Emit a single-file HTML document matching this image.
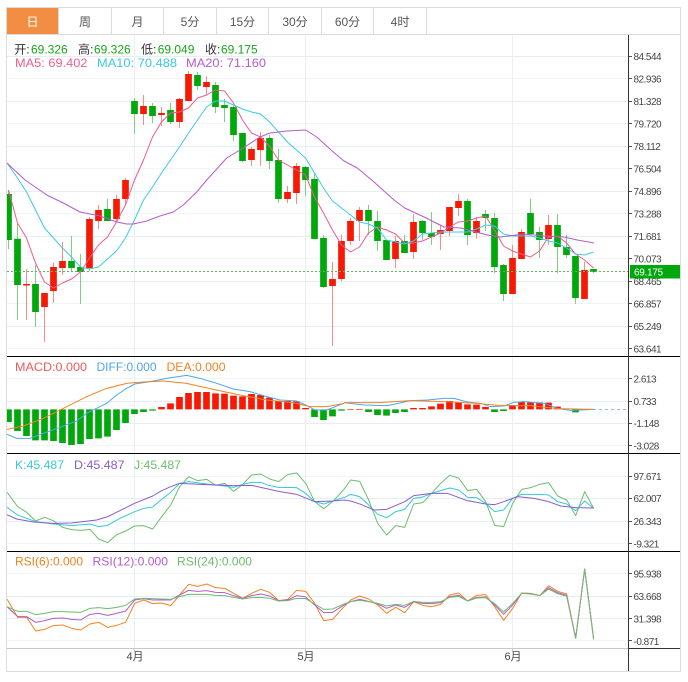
<!DOCTYPE html>
<html lang="zh">
<head>
<meta charset="utf-8">
<title>K线图</title>
<style>
html,body{margin:0;padding:0;background:#fff;width:688px;height:682px;overflow:hidden}
svg{display:block;font-family:"Liberation Sans","Noto Sans CJK SC",sans-serif}
.l{fill:none;stroke-width:1;stroke-linejoin:round;vector-effect:non-scaling-stroke}
.l polyline,polyline.l{vector-effect:non-scaling-stroke}
.ax text{font-size:10px;letter-spacing:-.5px;fill:#444}
.tab text{font-size:12px;fill:#555;text-anchor:middle}
.t{font-size:12px}
.tm{font-size:11px;fill:#444;text-anchor:middle}
</style>
</head>
<body>
<svg width="688" height="682" viewBox="0 0 688 682" xmlns="http://www.w3.org/2000/svg">
<defs>
<clipPath id="c"><rect x="7" y="35" width="621" height="613"/></clipPath>
</defs>
<!-- grid -->
<g shape-rendering="crispEdges" stroke-width="1">
<path stroke="#e6eef4" d="M7 56.5H628M7 101.5H628M7 146.5H628M7 191.5H628M7 236.5H628M7 281.5H628M7 326.5H628M7 401.5H628M7 423.5H628M7 498.5H628M7 521.5H628M7 596.5H628M7 618.5H628"/>
<path stroke="#f1f5f8" d="M7 78.5H628M7 123.5H628M7 168.5H628M7 213.5H628M7 258.5H628M7 303.5H628M7 348.5H628M7 378.5H628M7 445.5H628M7 476.5H628M7 543.5H628M7 573.5H628M7 640.5H628"/>
<path stroke="#e9f0f4" d="M134.5 35V648M305.5 35V648M512.5 35V648"/>
</g>
<!-- tabs -->
<g class="tab">
<rect x="7" y="8" width="51" height="26" fill="#f28e44"/>
<path shape-rendering="crispEdges" fill="none" stroke="#dcdcdc" d="M6.5 7.5H680.5V671.5H6.5ZM6.5 34.5H680.5M58.5 7V34M111.5 7V34M163.5 7V34M216.5 7V34M268.5 7V34M321.5 7V34M373.5 7V34M426.5 7V34"/>
<text x="32.5" y="26" style="fill:#fff">日</text>
<text x="85" y="26">周</text>
<text x="137.5" y="26">月</text>
<text x="190" y="26">5分</text>
<text x="242.5" y="26">15分</text>
<text x="295" y="26">30分</text>
<text x="347.5" y="26">60分</text>
<text x="400" y="26">4时</text>
</g>
<g clip-path="url(#c)">
<!-- wicks -->
<g shape-rendering="crispEdges" fill="none" stroke-width="1">
<path stroke="#7dd07d" d="M8.5 190V249M17.5 224V320M35.5 265V327M71.5 236V272M80.5 254V304M107.5 199V221M134.5 98V134M152.5 103V123M170.5 103V124M197.5 72V90M215.5 82V113M224.5 99V122M233.5 106V141M242.5 133V162M269.5 135V169M278.5 149V203M305.5 166V196M314.5 174V239M323.5 235V288M368.5 205V235M377.5 211V251M386.5 240V260M404.5 235V253M422.5 220V240M431.5 212V245M467.5 199V245M485.5 210V231M494.5 213V273M503.5 264V301M530.5 199V234M539.5 227V258M557.5 214V273M566.5 235V258M575.5 256V304M593.5 269V273"/>
<path stroke="#ff8a84" d="M26.5 269V320M44.5 293V342M53.5 263V303M62.5 242V275M89.5 217V271M98.5 205V229M116.5 195V222M125.5 178V205M143.5 95V125M161.5 107V126M179.5 98V128M188.5 71V101M206.5 76V95M251.5 147V166M260.5 132V166M287.5 186V203M296.5 163V204M332.5 262V346M341.5 235V281M350.5 218V245M359.5 207V241M395.5 236V268M413.5 214V259M440.5 225V250M449.5 207V236M458.5 194V216M476.5 217V239M512.5 245V294M521.5 229V259M548.5 215V245M584.5 262V299"/>
</g>
<!-- bodies -->
<path fill="none" stroke="#00a80b" stroke-width="6.7" d="M8.5 194V240M17.5 238.7V285M35.5 284V312M71.5 261V268M80.5 267V272M107.5 209V221M134.5 101V114M152.5 106V116M170.5 110V122M197.5 75V86M215.5 85V107M224.5 105V108M233.5 107V135M242.5 133V161M269.5 138V161M278.5 160V199M305.5 167V180M314.5 179V239M323.5 238V287M368.5 210V221M377.5 221V241M386.5 240V260M404.5 241V253M422.5 221V233M431.5 233V237M467.5 201V235M485.5 214V218M494.5 218V267M503.5 265V294M530.5 213V234M539.5 232V240M557.5 225V247M566.5 247V255M575.5 256V298M593.5 269V272"/>
<path fill="none" stroke="#f61a05" stroke-width="6.7" d="M26.5 284V285.5M44.5 293V307M53.5 267V291M62.5 261V268M89.5 219V268M98.5 210V221M116.5 199V219M125.5 180V199M143.5 106V114M161.5 113V115M179.5 99V122M188.5 74V101M206.5 82V87M251.5 149V160M260.5 138V150M287.5 192V199M296.5 166V193M332.5 279V286M341.5 241V279M350.5 221V241M359.5 210V221M395.5 241V259M413.5 222V252M440.5 230V234M449.5 207V231M458.5 201V208M476.5 221V233M512.5 258V294M521.5 232V259M548.5 225V239M584.5 270V299"/>
<!-- MA -->
<polyline class="l" stroke="#ec5b8d" points="8.5,190 17.5,223 26.5,238 35.5,263 44.5,282 53.5,288 62.5,283 71.5,279 80.5,272 89.5,258 98.5,245 107.5,237 116.5,222 125.5,205 134.5,180 143.5,160 152.5,137 161.5,122 170.5,113 179.5,112 188.5,108 197.5,98 206.5,95 215.5,90 224.5,91 233.5,103 242.5,120 251.5,133 260.5,137 269.5,146 278.5,160 287.5,165 296.5,170 305.5,175 314.5,197 323.5,213 332.5,230 341.5,245 350.5,252 359.5,247 368.5,233 377.5,227 386.5,230 395.5,234 404.5,243 413.5,243 422.5,241 431.5,237 440.5,233 449.5,227 458.5,222 467.5,221 476.5,218 485.5,216 494.5,230 503.5,246 512.5,251 521.5,254 530.5,257 539.5,251 548.5,237 557.5,236 566.5,243 575.5,254 584.5,260 593.5,268"/>
<polyline class="l" stroke="#3ccbe2" points="7,163 17.5,178 26.5,192 35.5,210 44.5,228 53.5,238 62.5,248 71.5,257 80.5,267 89.5,269 98.5,267 107.5,259 116.5,251 125.5,238 134.5,220 143.5,200 152.5,187 161.5,173 170.5,160 179.5,147 188.5,133 197.5,120 206.5,107 215.5,101 224.5,101 233.5,105 242.5,109 251.5,112 260.5,114 269.5,122 278.5,132 287.5,142 296.5,150 305.5,158 314.5,173 323.5,188 332.5,201 341.5,208 350.5,215 359.5,222 368.5,224 377.5,228 386.5,240 395.5,242 404.5,244 413.5,241 422.5,234 431.5,233 440.5,232 449.5,232 458.5,232 467.5,232 476.5,229 485.5,225 494.5,226 503.5,234 512.5,236 521.5,236 530.5,236 539.5,238 548.5,241 557.5,243 566.5,248 575.5,254 584.5,255 593.5,252"/>
<polyline class="l" stroke="#b45ccb" points="7,163 25,180 46.7,195 63.3,203 80,212 100,216 116.7,222 126.7,224 133.3,224 146.7,221 160,216 173.3,212 183.3,205 196.7,192 206.7,180 226.7,158 240,150 260,137 270,133 286.7,131 305.7,130 316.7,137 333.3,152 344,161 357.3,168 374,182 394,200 404.7,208 424,217 444,227 460.7,228 487.3,235 500.7,237 524,234 544,236 564,237 577.3,240 594,243"/>
<!-- price line -->
<path d="M7 271.5H628" stroke="#5cb85c" stroke-width="1" stroke-dasharray="2 2" shape-rendering="crispEdges"/>
<!-- MACD -->
<path d="M593 409.5H628" stroke="#7cc8e0" stroke-width="1" stroke-dasharray="3 3" shape-rendering="crispEdges"/>
<g transform="translate(0,350) scale(.33333)" fill="none" stroke-width="20">
<path stroke="#00a80b" d="M25.5 178V216M52.5 178V243M79.5 178V258M106.5 178V271M133.5 178V271M160.5 178V273M187.5 178V279M214.5 178V285M241.5 178V282M268.5 178V267M295.5 178V265M322.5 178V260M349.5 178V240M376.5 178V219M403.5 178V192M430.5 178V186M457.5 178V182M943.5 178V201M970.5 178V210M997.5 178V199M1024.5 178V182"/>
<path stroke="#f61a05" d="M484.5 171V178M511.5 160V178M538.5 141V178M565.5 129V178M592.5 126V178M619.5 126V178M646.5 130V178M673.5 131V178M700.5 137V178M727.5 139V178M754.5 132V178M781.5 135V178M808.5 143V178M835.5 153V178M862.5 153V178M889.5 154V178M916.5 174V178"/>
</g>
<g transform="translate(344,350) scale(.33333)" fill="none" stroke-width="20">
<path stroke="#f61a05" d="M19.5 177V179M46.5 177V179M208.5 174V178M235.5 174V178M262.5 169V178M289.5 161V178M316.5 153V178M343.5 156V178M370.5 163V178M397.5 164V178M424.5 171V178M505.5 165V178M532.5 156V178M559.5 156V178M586.5 157V178M613.5 158V178M640.5 170V178"/>
<path stroke="#00a80b" d="M73.5 178V186M100.5 178V195M127.5 178V197M154.5 178V189M181.5 178V186M451.5 178V186M478.5 178V183M694.5 178V187"/>
</g>
<g transform="translate(0,350) scale(.33333)">
<polyline class="l" stroke="#4da6f0" points="21,253 50,265 90,265 130,250 180,232 230,213 260,190 290,175 320,160 350,135 380,115 404,102 450,95 500,85 560,76 600,85 650,100 700,117 750,125 800,140 840,150 890,153 917,165 944,180 980,180 1032,160"/>
<polyline class="l" stroke="#f58220" points="21,238 70,228 130,205 200,170 260,140 320,115 380,100 430,96 490,93 560,100 640,118 720,135 800,150 880,158 930,170 980,170 1032,160"/>
</g>
<g transform="translate(344,350) scale(.33333)">
<polyline class="l" stroke="#4da6f0" points="0,158 60,165 130,167 200,152 250,150 300,145 330,145 370,156 410,160 440,170 480,168 510,157 540,155 600,160 640,175 680,181 710,180 749,178"/>
<polyline class="l" stroke="#f58220" points="0,158 100,158 200,152 300,155 400,160 470,167 560,167 640,176 749,178"/>
</g>
<!-- KDJ -->
<g transform="translate(0,450) scale(.33333)">
<polyline class="l" stroke="#6cbd6c" points="21,127 53,170 80,187 107,213 134,202 160,212 188,232 215,239 242,241 270,238 296,267 323,278 350,254 377,243 404,228 431,227 458,237 485,200 512,165 539,110 566,80 593,92 620,88 647,106 674,100 701,124 728,103 755,75 782,72 809,87 836,95 863,74 890,69 917,100 944,155 971,176 998,155 1032,118"/>
<polyline class="l" stroke="#36c8de" points="21,172 53,195 107,215 160,222 215,227 270,222 296,230 323,226 360,205 404,185 431,175 458,171 485,148 512,127 539,100 566,95 620,102 647,105 674,108 701,112 728,103 755,97 782,97 809,107 836,112 890,113 917,130 944,155 971,162 998,153 1032,142"/>
<polyline class="l" stroke="#8a5cc8" points="21,194 50,207 100,216 160,220 215,219 290,210 323,200 404,160 458,138 485,122 512,110 539,100 620,104 700,107 755,106 836,124 890,133 944,155 1000,153 1032,150"/>
</g>
<g transform="translate(344,450) scale(.33333)">
<polyline class="l" stroke="#6cbd6c" points="0,118 20,90 47,94 74,150 101,220 128,255 155,227 182,232 209,162 236,158 263,130 290,100 317,76 344,84 371,122 398,118 425,155 452,226 479,230 506,160 533,118 560,113 587,103 614,98 641,138 668,150 695,197 722,125 749,175"/>
<polyline class="l" stroke="#36c8de" points="0,143 20,133 47,140 74,165 101,193 128,203 155,185 182,178 209,145 236,141 263,130 290,122 317,114 344,120 371,142 398,143 425,160 452,185 479,180 506,145 533,133 560,133 587,133 614,135 641,155 668,162 695,182 722,153 749,175"/>
<polyline class="l" stroke="#8a5cc8" points="0,150 20,153 50,163 90,180 128,178 182,155 209,137 263,130 310,130 370,152 425,162 452,164 479,155 520,140 570,145 614,155 650,168 695,173 749,174"/>
</g>
<!-- RSI -->
<g transform="translate(0,550) scale(.33333)">
<polyline class="l" stroke="#f58220" points="21,147 53,202 80,202 107,243 134,238 160,227 188,225 215,235 242,240 270,222 296,217 323,232 350,226 377,217 404,160 431,150 458,161 485,159 512,167 539,135 566,103 593,109 620,102 647,113 674,115 701,130 728,145 755,130 782,118 809,127 836,152 863,148 890,121 917,124 944,160 971,212 998,208 1032,170"/>
<polyline class="l" stroke="#b45ccb" points="21,170 53,200 80,200 107,217 134,212 160,205 188,204 215,208 242,210 270,193 296,190 323,196 350,190 377,183 404,150 431,146 458,150 485,150 512,150 539,135 566,121 593,124 620,122 647,127 674,128 701,137 728,145 755,137 782,132 809,138 836,152 863,150 890,137 917,141 944,165 971,188 998,187 1032,165"/>
<polyline class="l" stroke="#6cbd6c" points="21,170 53,184 80,184 107,194 134,190 160,185 188,185 215,186 242,187 270,175 296,173 323,176 350,172 377,166 404,147 431,145 458,146 485,147 512,148 539,140 566,133 593,133 620,133 647,136 674,137 701,142 728,147 755,143 782,142 809,145 836,153 863,152 890,145 917,146 944,162 971,178 998,177 1032,162"/>
</g>
<g transform="translate(344,550) scale(.33333)">
<polyline class="l" stroke="#f58220" points="0,170 20,150 47,138 74,147 101,165 128,190 155,172 182,188 209,155 236,166 263,170 290,163 317,135 344,129 371,153 398,136 425,134 452,170 479,211 506,175 533,129 560,130 587,137 614,107 641,124 668,132 695,265 722,57 749,268"/>
<polyline class="l" stroke="#b45ccb" points="0,165 20,155 47,148 74,154 101,162 128,175 155,165 182,172 209,155 236,160 263,161 290,158 317,140 344,136 371,153 398,142 425,141 452,165 479,193 506,165 533,130 560,131 587,137 614,113 641,128 668,136 695,265 722,57 749,268"/>
<polyline class="l" stroke="#6cbd6c" points="0,162 20,155 47,151 74,155 101,160 128,168 155,163 182,166 209,154 236,157 263,157 290,155 317,142 344,139 371,153 398,144 425,143 452,161 479,186 506,160 533,130 560,132 587,137 614,117 641,131 668,139 695,265 722,57 749,268"/>
</g>
</g>
<!-- panel lines -->
<g shape-rendering="crispEdges" fill="none" stroke-width="1">
<path stroke="#000" d="M7 356.5H680M7 453.5H680M7 551.5H680"/>
<path stroke="#c8c8c8" d="M7 648.5H628M134.5 648V652M305.5 648V652M512.5 648V652"/>
<path stroke="#333" d="M628.5 35V671M628 648.5H680"/>
<path stroke="#555" d="M629 56.5H632M629 78.5H632M629 101.5H632M629 123.5H632M629 146.5H632M629 168.5H632M629 191.5H632M629 213.5H632M629 236.5H632M629 258.5H632M629 281.5H632M629 303.5H632M629 326.5H632M629 348.5H632M629 378.5H632M629 401.5H632M629 423.5H632M629 445.5H632M629 476.5H632M629 498.5H632M629 521.5H632M629 543.5H632M629 573.5H632M629 596.5H632M629 618.5H632M629 640.5H632"/>
</g>
<!-- axis labels -->
<g class="ax">
<text x="633.5" y="60">84.544</text>
<text x="633.5" y="82.5">82.936</text>
<text x="633.5" y="105">81.328</text>
<text x="633.5" y="127.5">79.720</text>
<text x="633.5" y="150">78.112</text>
<text x="633.5" y="172.5">76.504</text>
<text x="633.5" y="195">74.896</text>
<text x="633.5" y="217.5">73.288</text>
<text x="633.5" y="240">71.681</text>
<text x="633.5" y="262.5">70.073</text>
<text x="633.5" y="285">68.465</text>
<text x="633.5" y="307.5">66.857</text>
<text x="633.5" y="330">65.249</text>
<text x="633.5" y="352.5">63.641</text>
<text x="633.5" y="382.5">2.613</text>
<text x="633.5" y="405">0.733</text>
<text x="633.5" y="427">-1.148</text>
<text x="633.5" y="449.5">-3.028</text>
<text x="633.5" y="480">97.671</text>
<text x="633.5" y="502">62.007</text>
<text x="633.5" y="525">26.343</text>
<text x="633.5" y="547.5">-9.321</text>
<text x="633.5" y="577.5">95.938</text>
<text x="633.5" y="600">63.668</text>
<text x="633.5" y="622.5">31.398</text>
<text x="633.5" y="645">-0.871</text>
</g>
<rect x="630" y="265" width="50" height="13.5" fill="#00a80b"/>
<text x="634" y="275.5" style="font-size:10px;letter-spacing:-.3px;fill:#fff">69.175</text>
<!-- time labels -->
<text class="tm" x="135" y="660">4月</text>
<text class="tm" x="306" y="660">5月</text>
<text class="tm" x="513" y="660">6月</text>
<!-- legends -->
<g class="t">
<text x="14.3" y="53.5" fill="#333">开:</text>
<text x="31" y="53.5" fill="#1aa51a">69.326</text>
<text x="78" y="53.5" fill="#333">高:</text>
<text x="94" y="53.5" fill="#1aa51a">69.326</text>
<text x="141" y="53.5" fill="#333">低:</text>
<text x="157.7" y="53.5" fill="#1aa51a">69.049</text>
<text x="205" y="53.5" fill="#333">收:</text>
<text x="221" y="53.5" fill="#1aa51a">69.175</text>
<text x="15" y="67" fill="#ee5f8f" textLength="72.5" lengthAdjust="spacingAndGlyphs">MA5: 69.402</text>
<text x="97" y="67" fill="#3cc8e0" textLength="80" lengthAdjust="spacingAndGlyphs">MA10: 70.488</text>
<text x="186" y="67" fill="#b45ccb" textLength="80" lengthAdjust="spacingAndGlyphs">MA20: 71.160</text>
<text x="15" y="371" fill="#f25a5a" textLength="72" lengthAdjust="spacingAndGlyphs">MACD:0.000</text>
<text x="96.5" y="371" fill="#4da6f0" textLength="60" lengthAdjust="spacingAndGlyphs">DIFF:0.000</text>
<text x="166.5" y="371" fill="#f58220" textLength="59" lengthAdjust="spacingAndGlyphs">DEA:0.000</text>
<text x="15" y="469" fill="#36c8de" textLength="49" lengthAdjust="spacingAndGlyphs">K:45.487</text>
<text x="74" y="469" fill="#8a5cc8" textLength="50.5" lengthAdjust="spacingAndGlyphs">D:45.487</text>
<text x="134" y="469" fill="#6cbd6c" textLength="47" lengthAdjust="spacingAndGlyphs">J:45.487</text>
<text x="15" y="565.5" fill="#f58220" textLength="68" lengthAdjust="spacingAndGlyphs">RSI(6):0.000</text>
<text x="92.5" y="565.5" fill="#b45ccb" textLength="75.5" lengthAdjust="spacingAndGlyphs">RSI(12):0.000</text>
<text x="177" y="565.5" fill="#6cbd6c" textLength="75" lengthAdjust="spacingAndGlyphs">RSI(24):0.000</text>
</g>
</svg>
</body>
</html>
